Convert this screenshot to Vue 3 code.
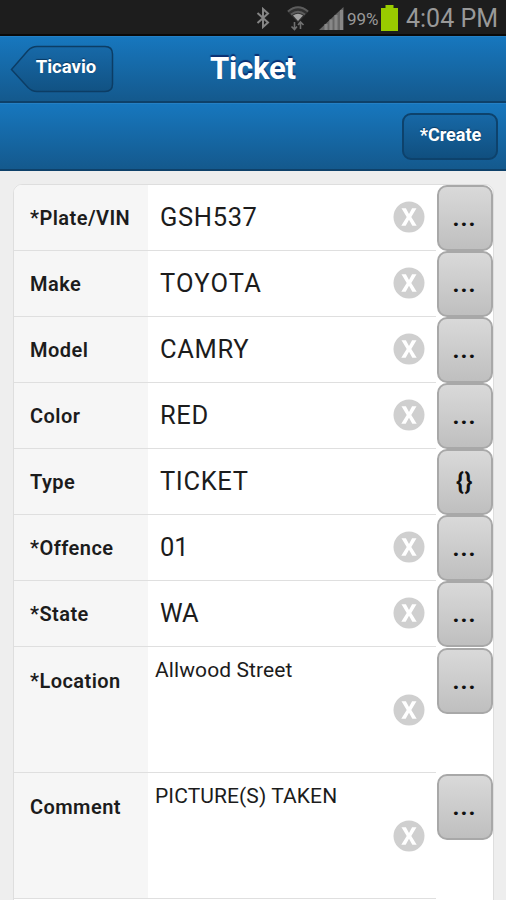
<script setup>
const rows = [
  { label: '*Plate/VIN', value: 'GSH537', clear: true },
  { label: 'Make', value: 'TOYOTA', clear: true, wide: true },
  { label: 'Model', value: 'CAMRY', clear: true },
  { label: 'Color', value: 'RED', clear: true },
  { label: 'Type', value: 'TICKET', clear: false, action: '{}' },
  { label: '*Offence', value: '01', clear: true, narrow: true },
  { label: '*State', value: 'WA', clear: true, narrow: true },
  { label: '*Location', value: 'Allwood Street', clear: true, tall: true },
  { label: 'Comment', value: 'PICTURE(S) TAKEN', clear: true, tall: true },
]
</script>

<template>
  <div class="screen">
    <div class="status">
      <svg class="bluetooth" viewBox="0 0 14 22" width="14" height="22">
        <path d="M1.500 6 L12 15.500 L7 20 V2 L12 6.500 L1.500 16" fill="none" stroke="#858585" stroke-width="2" />
      </svg>
      <svg class="wifi" viewBox="0 0 22 26" width="22" height="26">
        <path d="M0 5 Q11 -4 22 5 L11 17 Z" fill="#303030" />
        <path d="M1 5.500 Q11 -3 21 5.500 M4 8.500 Q11 3 18 8.500" fill="none" stroke="#5c5c5c" stroke-width="1.800" />
        <path d="M6 9.500 Q11 6 16 9.500 L11 15 Z" fill="#a2a2a2" />
        <path d="M7.500 16 V23 M4.500 20.500 L7.500 23.500 L10 20.500 M13.500 23 V17 M11 19 L13.500 16 L16.500 19" fill="none" stroke="#707070" stroke-width="1.600" />
      </svg>
      <svg class="signal" viewBox="0 0 25 23" width="25" height="23">
        <path d="M0 23 L24.500 0 V23 Z" fill="#666" />
        <path d="M7 17 V23 M12 12.500 V23 M17 8 V23 M22.500 3 V23" stroke="#878787" stroke-width="3" />
      </svg>
      <span class="percent">99%</span>
      <svg class="battery" viewBox="0 0 17 26" width="17" height="26">
        <path d="M0 3 H4.500 V0 H12.500 V3 H17 V26 H0 Z" fill="#99cc00" />
      </svg>
      <span class="time">4:04 PM</span>
    </div>

    <header class="bar title-bar">
      <button class="back">
        <svg class="back-shape" viewBox="0 0 104 48" width="104" height="48">
          <defs>
            <linearGradient id="backFill" x1="0" y1="0" x2="0" y2="1">
              <stop offset="0" stop-color="#1769a8" />
              <stop offset="1" stop-color="#115283" />
            </linearGradient>
          </defs>
          <path d="M1.500 24.500 L18 5.500 Q22 1.500 27 1.500 H95 Q102.500 1.500 102.500 9 V39 Q102.500 46.500 95 46.500 H27 Q22 46.500 18 42.500 Z" fill="url(#backFill)" stroke="#0c3d65" stroke-width="1.500" />
        </svg>
        <span class="back-text">Ticavio</span>
      </button>
      <h1>Ticket</h1>
    </header>
    <div class="bar tool-bar">
      <button class="create">*Create</button>
    </div>

    <main class="content">
      <div class="form">
        <div v-for="r in rows" :key="r.label" class="row" :class="{ tall: r.tall, wide: r.wide, narrow: r.narrow }">
          <div class="label">{{ r.label }}</div>
          <div class="field">
            <span class="value">{{ r.value }}</span>
            <svg v-if="r.clear" class="clear" viewBox="0 0 32 32" width="32" height="32">
              <circle cx="16" cy="16" r="15.500" fill="#cfcfcf" />
              <path d="M8.500 7.300 H12.900 L16 13 L19.100 7.300 H23.500 L18.300 15.900 L23.700 24.700 H19.300 L16 18.800 L12.700 24.700 H8.300 L13.700 15.900 Z" fill="#fff" />
            </svg>
          </div>
          <button class="more">
            <span v-if="r.action" class="braces">{{ r.action }}</span>
            <span v-else class="dots">...</span>
          </button>
        </div>
      </div>
    </main>
  </div>
</template>

<style>
body { margin: 0; overflow: hidden; background: #eee; }
</style>

<style scoped>
.screen { width: 506px; height: 900px; overflow: hidden; background: #eee; font-family: Roboto, "Liberation Sans", sans-serif; display: flex; flex-direction: column; }
button { font-family: inherit; margin: 0; padding: 0; box-sizing: border-box; }
.status { flex: none; height: 36px; box-sizing: border-box; border-bottom: 2px solid #0a0a0a; background: #1d1d1d; display: flex; align-items: flex-start; justify-content: flex-end; padding-right: 9px; color: #999; }
.status svg { flex: none; }
.bluetooth { margin: 7px 17px 0 0; }
.wifi { margin: 6px 10px 0 0; }
.signal { margin: 7px 3px 0 0; }
.percent { width: 33px; margin-right: 1px; font-size: 17px; line-height: 38px; letter-spacing: -.1px; white-space: nowrap; }
.battery { margin: 5px 8px 0 0; }
.time { width: 91px; font-size: 25px; line-height: 37px; white-space: nowrap; }

.bar { flex: none; box-sizing: border-box; display: flex; background: linear-gradient(#1777be, #14598d); border-top: 1px solid #2480c5; border-bottom: 2px solid #0e416a; }
.title-bar { height: 67px; padding: 8px 0 0 10px; }
.back { width: 104px; height: 48px; display: grid; place-items: center; border: 0; background: none; color: #fff; }
.back > * { grid-area: 1 / 1; }
.back-text { font-size: 18.5px; font-weight: 700; padding: 0 0 4px 8px; text-shadow: 0 -1px 1px #0b3962; }
h1 { margin: 0 0 0 96px; font-size: 31px; line-height: 47px; font-weight: 700; letter-spacing: -.2px; color: #fff; text-shadow: 0 -2px 1px #0b2f72; }
.tool-bar { height: 68px; justify-content: flex-end; padding: 9px 8px 0 0; }
.create { width: 96px; height: 47px; border: 2px solid #0d426c; border-radius: 9px; background: linear-gradient(#1768a6, #104f7f); color: #fff; font-size: 18px; font-weight: 700; padding: 0 0 4px 1px; text-shadow: 0 -1px 1px #0b3962; }

.content { padding: 13px 12px 0 13px; }
.form { border: 1px solid #dedede; border-radius: 9px 9px 0 0; background: #fff; height: 720px; }
.row { height: 66px; display: grid; grid-template-columns: 134px 288.500px 56px; background: linear-gradient(#dfdfdf, #dfdfdf) left bottom / 422px 1px no-repeat; }
.row.tall { height: 126px; }
.label { height: 65px; box-sizing: border-box; padding: 1px 0 0 16px; background: #f6f6f6; font-size: 20px; line-height: 65px; font-weight: 600; color: #1c1c1c; letter-spacing: .45px; white-space: nowrap; }
.row:first-child .label { border-radius: 8px 0 0; }
.tall .label { height: 125px; padding-top: 2px; }
.field { height: 65px; box-sizing: border-box; display: flex; justify-content: space-between; padding: 0 12px 0 12px; }
.value { font-size: 25.500px; line-height: 64px; color: #1c1c1c; letter-spacing: .65px; white-space: nowrap; }
.wide .value { letter-spacing: 1.200px; }
.narrow .value { letter-spacing: 0; }
.clear { margin-top: 16px; flex: none; }
.tall .field { height: 125px; padding-left: 7px; }
.tall .value { font-size: 21px; line-height: 47px; letter-spacing: .1px; }
.tall .clear { margin-top: 47px; }
.more { width: 56px; height: 66px; border: 2px solid #a8a8a8; border-radius: 10px; background: linear-gradient(#d9d9d9, #bfbfbf); color: #111; font-weight: 700; display: flex; align-items: center; justify-content: center; }
.tall .more { margin-top: 1px; }
.dots { font-size: 24px; line-height: 30px; letter-spacing: 1px; }
.braces { font-size: 24px; line-height: 30px; letter-spacing: .5px; }
</style>
